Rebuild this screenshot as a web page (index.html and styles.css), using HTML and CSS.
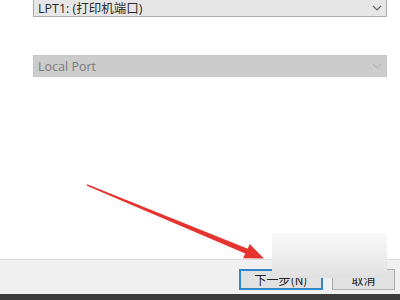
FILE: index.html
```html
<!DOCTYPE html>
<html>
<head>
<meta charset="utf-8">
<link rel="stylesheet" href="styles.css">
</head>
<body>
<div class="page">
  <div class="content">
    <div class="select select-top">
      <span class="select-text">LPT1: (打印机端口)</span>
      <svg class="chev" width="10" height="6" viewBox="0 0 10 6"><path d="M1 1 L5 5 L9 1" fill="none" stroke="#666" stroke-width="1.2"/></svg>
    </div>
    <div class="select select-disabled">
      <span class="select-text">Local Port</span>
      <svg class="chev" width="10" height="6" viewBox="0 0 10 6"><path d="M1 1 L5 5 L9 1" fill="none" stroke="#b5b5b5" stroke-width="1.2"/></svg>
    </div>
  </div>
  <div class="footer">
    <div class="btn btn-primary">下一步(N)</div>
    <div class="btn">取消</div>
  </div>
  <div class="taskbar"></div>
  <svg class="arrow" width="400" height="300" viewBox="0 0 400 300">
    <polygon points="87.2,184.3 247.8,248.8 249.6,244 264,258.5 243,258.2 245.2,253.4 86.8,185.7" fill="#e5332e"/>
  </svg>
  <div class="cover-strip"></div>
  <div class="cover"></div>
</div>
</body>
</html>
```
FILE: styles.css
```css
html, body {
  margin: 0;
  padding: 0;
  background: #ffffff;
}
.page {
  position: relative;
  width: 400px;
  height: 300px;
  overflow: hidden;
  display: flex;
  flex-direction: column;
  font-family: "Open Sans", "Noto Sans", "Noto Sans CJK SC", sans-serif;
  font-size: 12px;
}
.content {
  flex: 1;
  display: flex;
  flex-direction: column;
  gap: 38px;
  padding-left: 33px;
  padding-right: 13px;
}
.select {
  box-sizing: border-box;
  display: flex;
  align-items: center;
  justify-content: space-between;
  padding: 0 4px 0 4px;
}
.select-top {
  margin-top: -8px;
  height: 25px;
  background: #e6e6e6;
  border: 1px solid #adadad;
}
.select-top .select-text {
  color: #2a2a2a;
  font-size: 12.5px;
  padding-top: 6px;
}
.select-top .chev {
  margin-top: 6px;
}
.select-disabled {
  height: 22px;
  background: #cccccc;
  border: 1px solid #c6c6c6;
}
.select-disabled .select-text {
  color: #7a7a7a;
  font-size: 12.5px;
}
.footer {
  height: 35px;
  box-sizing: border-box;
  background: #f0f0f0;
  border-top: 1px solid #dadada;
  display: flex;
  justify-content: flex-end;
  align-items: flex-start;
  gap: 9px;
  padding: 9px 5px 0 0;
}
.btn {
  box-sizing: border-box;
  width: 63px;
  height: 21px;
  background: #e1e1e1;
  border: 1px solid #adadad;
  display: flex;
  align-items: center;
  justify-content: center;
  color: #222;
  font-family: "Noto Sans CJK SC", sans-serif;
  font-size: 12px;
}
.btn-primary {
  width: 84px;
  border: 2px solid #2f86c8;
}
.taskbar {
  height: 6px;
  background: #3b3b3b;
}
.arrow {
  position: absolute;
  left: 0;
  top: 0;
  filter: blur(0.4px);
}
.cover {
  position: absolute;
  left: 272px;
  top: 233px;
  width: 115px;
  height: 45px;
  background: linear-gradient(to bottom, #fafafa, #e0e0e0);
}
.cover-strip {
  position: absolute;
  left: 268px;
  top: 247px;
  width: 4px;
  height: 12px;
  background: #ffffff;
}
```
